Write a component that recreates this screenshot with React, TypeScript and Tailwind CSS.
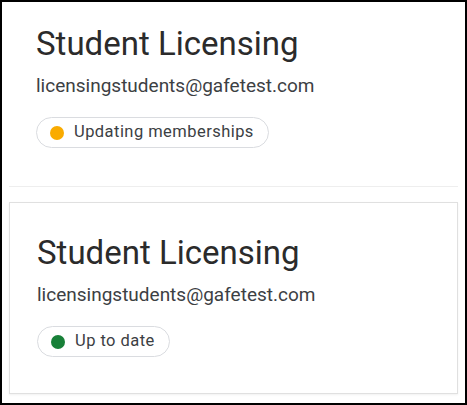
const font = { fontFamily: 'Roboto, "Noto Sans", sans-serif' };

function StatusChip({ color, label }: { color: string; label: string }) {
  return (
    <div className="inline-flex h-[31px] items-center gap-[10px] rounded-full border border-[#dadce0] pl-[13px] pr-[14px]">
      <span className={`h-[14px] w-[14px] rounded-full ${color}`} />
      <span className="text-[16.5px] tracking-[0.45px] text-[#3c4043]">{label}</span>
    </div>
  );
}

function GroupSummary({ status, dot }: { status: string; dot: string }) {
  return (
    <div>
      <h1 className="m-0 text-[33px] leading-[40px] text-[#2b2b2b]">Student Licensing</h1>
      <div className="mt-[10px] text-[19px] leading-[24px] text-[#3c4043]">
        licensingstudents@gafetest.com
      </div>
      <div className="mt-[19px]">
        <StatusChip color={dot} label={status} />
      </div>
    </div>
  );
}

export default function App() {
  return (
    <div style={font} className="h-[405px] w-[467px] border-2 border-black bg-white">
      <div className="px-[34px] pt-[22px] pb-[38px]">
        <GroupSummary status="Updating memberships" dot="bg-[#f9ab00]" />
      </div>
      <div className="mx-[7px] border-t border-[#eeeeee]" />
      <div className="mx-[7px] mt-[15px] h-[192px] border border-[#e0e0e0] px-[27px] pt-[30px] shadow-[0_1px_2px_rgba(0,0,0,0.06)]">
        <GroupSummary status="Up to date" dot="bg-[#188038]" />
      </div>
    </div>
  );
}
